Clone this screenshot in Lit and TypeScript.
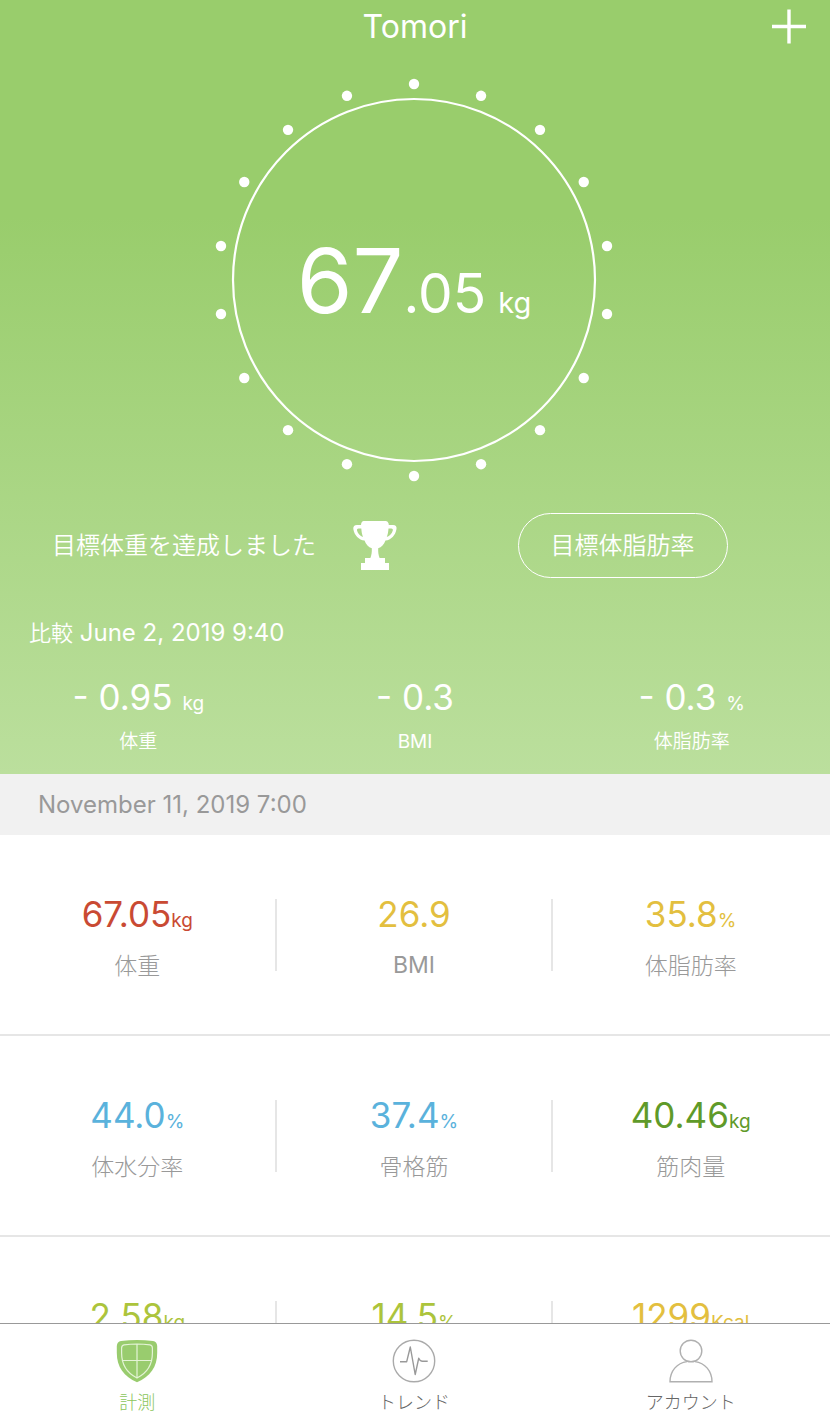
import { LitElement, html, svg, css } from "lit";
import { customElement, state } from "lit/decorators.js";

interface Metric {
  value: string;
  unit?: string;
  label?: string;
  tone: string;
}

const CHANGES = [
  { value: "- 0.95", unit: "kg", label: "体重" },
  { value: "- 0.3", unit: "", label: "BMI" },
  { value: "- 0.3", unit: "%", label: "体脂肪率" },
];

const METRICS: Metric[] = [
  { value: "67.05", unit: "kg", label: "体重", tone: "red" },
  { value: "26.9", label: "BMI", tone: "yellow" },
  { value: "35.8", unit: "%", label: "体脂肪率", tone: "yellow" },
  { value: "44.0", unit: "%", label: "体水分率", tone: "blue" },
  { value: "37.4", unit: "%", label: "骨格筋", tone: "blue" },
  { value: "40.46", unit: "kg", label: "筋肉量", tone: "green" },
  { value: "2.58", unit: "kg", tone: "lime" },
  { value: "14.5", unit: "%", tone: "lime" },
  { value: "1299", unit: "Kcal", tone: "yellow" },
];

const DOT_COUNT = 18;

const shieldIcon = html`<svg class="icon" viewBox="0 0 44 44" aria-hidden="true">
  <path d="M6 1.900Q22 0 38 1.900Q41.800 2.500 42.200 7V14C42.200 28 35 37.500 22 43.200C9 37.500 1.800 28 1.800 14V7Q2.200 2.500 6 1.900Z" fill="#99cc6e"/>
  <path d="M9 5.800Q22 4.200 35 5.800Q37.300 6.200 37.400 9V14C37.400 26 32 34 22 39C12 34 6.600 26 6.600 14V9Q6.700 6.200 9 5.800ZM22 5V39M6.800 21.500H37.200" fill="none" stroke="#e4f3d6" stroke-width="1.200"/>
</svg>`;

const pulseIcon = html`<svg class="icon" viewBox="0 0 44 44" fill="none" stroke="#aaa" stroke-width="1.400" aria-hidden="true">
  <circle cx="22" cy="22" r="20.700"/>
  <path d="M8 22.700H14.700L18.300 8L23.200 35.500L26.700 19.300Q28 22.300 30.500 22.300H35.700" stroke="#999" stroke-linejoin="round"/>
</svg>`;

const personIcon = html`<svg class="icon" viewBox="0 0 44 44" fill="none" stroke="#b0b0b0" stroke-width="1.400" aria-hidden="true">
  <circle cx="22" cy="12" r="10.800"/>
  <path d="M18 22.600C8 24 1 32 1 42.700H43C43 32 36 24 26 22.600"/>
</svg>`;

const TABS = [
  { label: "計測", icon: shieldIcon },
  { label: "トレンド", icon: pulseIcon },
  { label: "アカウント", icon: personIcon },
];

const isLatin = (text: string) => /^[A-Za-z]+$/.test(text);

@customElement("app-root")
export class AppRoot extends LitElement {
  @state() private active = 0;

  static styles = css`
    :host {
      display: flex;
      flex-direction: column;
      height: 100vh;
      background: #fff;
      color: #999;
      font-family: Inter, "Noto Sans CJK JP", sans-serif;
      font-weight: 400;
    }
    * {
      box-sizing: border-box;
    }
    button {
      font: inherit;
      color: inherit;
      background: none;
      border: 0;
      padding: 0;
      cursor: pointer;
    }
    h1, h2, p, dl, dd, dt {
      margin: 0;
      font-weight: inherit;
    }
    .scroll {
      flex: 1;
      min-height: 0;
      overflow-y: auto;
      scrollbar-width: none;
    }
    .hero {
      background: linear-gradient(#99cd6c 28%, #bbdf9d 100%);
      color: #fff;
      padding-bottom: 20px;
    }
    .top {
      display: grid;
      grid-template-columns: 1fr auto 1fr;
      align-items: center;
      height: 54px;
      padding: 0 23px;
    }
    .title {
      grid-column: 2;
      font-size: 32px;
      line-height: 40px;
    }
    .add {
      justify-self: end;
      height: 36px;
    }
    .add svg {
      display: block;
      width: 36px;
      height: 36px;
    }
    .dial {
      display: grid;
      place-items: center;
      padding: 24px 2px 0 0;
    }
    .dial > * {
      grid-area: 1 / 1;
    }
    .ring {
      width: 404px;
      height: 404px;
    }
    .weight {
      display: flex;
      align-items: baseline;
      padding-top: 2px;
    }
    .whole {
      font-size: 90px;
      line-height: 108px;
    }
    .fraction {
      font-size: 55px;
    }
    .dial-unit {
      font-size: 29px;
      margin-left: 12px;
    }
    .goals {
      display: grid;
      grid-template-columns: 1fr 1fr;
      align-items: center;
      margin-top: 31px;
      font-size: 24px;
      line-height: 32px;
      font-weight: 350;
    }
    .reached {
      display: flex;
      align-items: center;
      gap: 37px;
      padding-left: 52px;
      white-space: nowrap;
    }
    .trophy {
      width: 44px;
      height: 49px;
    }
    .pill {
      justify-self: center;
      height: 65px;
      padding: 0 32px;
      border: 1px solid #fff;
      border-radius: 33px;
    }
    .compare {
      margin-top: 39px;
      padding-left: 29px;
      font-size: 24px;
      line-height: 32px;
    }
    .compare .word {
      font-size: 22px;
      font-weight: 350;
    }
    .changes {
      display: grid;
      grid-template-columns: repeat(3, 1fr);
      margin-top: 26px;
      text-align: center;
    }
    .cell {
      display: flex;
      flex-direction: column-reverse;
    }
    .changes dd {
      font-size: 35px;
      line-height: 44px;
    }
    .unit {
      font-size: 19px;
      line-height: 1;
    }
    .changes dt {
      font-size: 19px;
      line-height: 24px;
      margin-top: 11px;
      font-weight: 350;
    }
    .date {
      background: #f1f1f1;
      padding: 0 38px;
      font-size: 24px;
      line-height: 61px;
    }
    .metrics {
      display: grid;
      grid-template-columns: repeat(3, 1fr);
      text-align: center;
    }
    .metric {
      padding: 64px 0 63px;
      border-bottom: 2px solid #e6e6e6;
    }
    .metric .cell {
      height: 72px;
      justify-content: flex-end;
      border-right: 2px solid #e6e6e6;
    }
    .metric:nth-child(3n) .cell {
      border-right-color: transparent;
    }
    .metric dd {
      font-size: 35px;
      line-height: 30px;
    }
    .metric dt {
      font-size: 23px;
      line-height: 30px;
      margin-top: 21px;
      font-weight: 300;
    }
    .cell dt.latin {
      font-weight: 400;
    }
    .red { color: #c94a33; }
    .yellow { color: #e3bf3f; }
    .blue { color: #5ab2dc; }
    .green { color: #5f9a29; }
    .lime { color: #acc43c; }
    .tabs {
      display: grid;
      grid-template-columns: repeat(3, 1fr);
      height: 99px;
      border-top: 1px solid #999;
      background: #fff;
    }
    .tab {
      display: flex;
      flex-direction: column;
      align-items: center;
      padding: 15px 2px 0 0;
      font-size: 18px;
      line-height: 28px;
      font-weight: 300;
      color: #666;
    }
    .tab .name {
      margin-top: 6px;
    }
    .tab.on {
      color: #8cc65c;
    }
    .icon {
      display: block;
      width: 44px;
      height: 44px;
    }
  `;

  private dots() {
    return Array.from({ length: DOT_COUNT }, (_, i) => {
      const angle = (i * 2 * Math.PI) / DOT_COUNT;
      return svg`<circle cx=${202 + 196 * Math.sin(angle)} cy=${202 - 196 * Math.cos(angle)} r="5.200" fill="#fff"/>`;
    });
  }

  private term(label: string) {
    return html`<dt class=${isLatin(label) ? "latin" : ""}>${label}</dt>`;
  }

  render() {
    return html`
      <main class="scroll">
        <section class="hero">
          <header class="top">
            <h1 class="title">Tomori</h1>
            <button class="add" aria-label="追加">
              <svg viewBox="0 0 36 36" aria-hidden="true">
                <path d="M18 .500V34.500M1 17.500H35" stroke="#fff" stroke-width="3.400"/>
              </svg>
            </button>
          </header>
          <div class="dial">
            <svg class="ring" viewBox="0 0 404 404" aria-hidden="true">
              <circle cx="202" cy="202" r="181" fill="none" stroke="#fff" stroke-width="2.200"/>
              ${this.dots()}
            </svg>
            <p class="weight"><span class="whole">67</span><span class="fraction">.05</span><span class="dial-unit">kg</span></p>
          </div>
          <div class="goals">
            <p class="reached">
              目標体重を達成しました
              <svg class="trophy" viewBox="0 0 44 49" fill="#fff" aria-hidden="true">
                <path d="M10.500 0H33Q35 0 35.600 2.500L35.800 4H40Q44 4 43.500 8C42.500 14.500 38 19 32.500 19.500C31 23.500 28.500 26.500 25.200 27.200C25 31 25.500 34 26.600 37H32V42H36V49H8V42H12V37H17.400C18.500 34 19 31 18.800 27.200C15.500 26.500 13 23.500 11.500 19.500C6 19 1.300 14.500 .300 8Q0 4 4 4H8L8.200 2.500Q8.600 0 10.500 0ZM8.300 7.500H5.500Q3.500 7.500 4 9.500C4.900 12.500 7 15 10 16C9 13.500 8.500 10.500 8.300 7.500ZM35.500 7.500C35.300 10.500 34.800 13.500 33.800 16C36.800 15 38.900 12.500 39.800 9.500Q40.300 7.500 38.300 7.500Z" fill-rule="evenodd"/>
              </svg>
            </p>
            <button class="pill">目標体脂肪率</button>
          </div>
          <p class="compare"><span class="word">比較</span> <time datetime="2019-06-02T09:40">June 2, 2019 9:40</time></p>
          <dl class="changes">
            ${CHANGES.map(
              (c) => html`<div class="cell">
                ${this.term(c.label)}
                <dd>${c.value}${c.unit ? html` <span class="unit">${c.unit}</span>` : null}</dd>
              </div>`
            )}
          </dl>
        </section>
        <h2 class="date">November 11, 2019 7:00</h2>
        <div class="metrics">
          ${METRICS.map(
            (m) => html`<div class="metric">
              <dl class="cell">
                ${m.label ? this.term(m.label) : null}
                <dd class=${m.tone}>${m.value}${m.unit ? html`<span class="unit">${m.unit}</span>` : null}</dd>
              </dl>
            </div>`
          )}
        </div>
      </main>
      <nav class="tabs">
        ${TABS.map(
          (t, i) => html`<button class="tab ${i === this.active ? "on" : ""}" @click=${() => (this.active = i)}>
            ${t.icon}<span class="name">${t.label}</span>
          </button>`
        )}
      </nav>
    `;
  }
}
